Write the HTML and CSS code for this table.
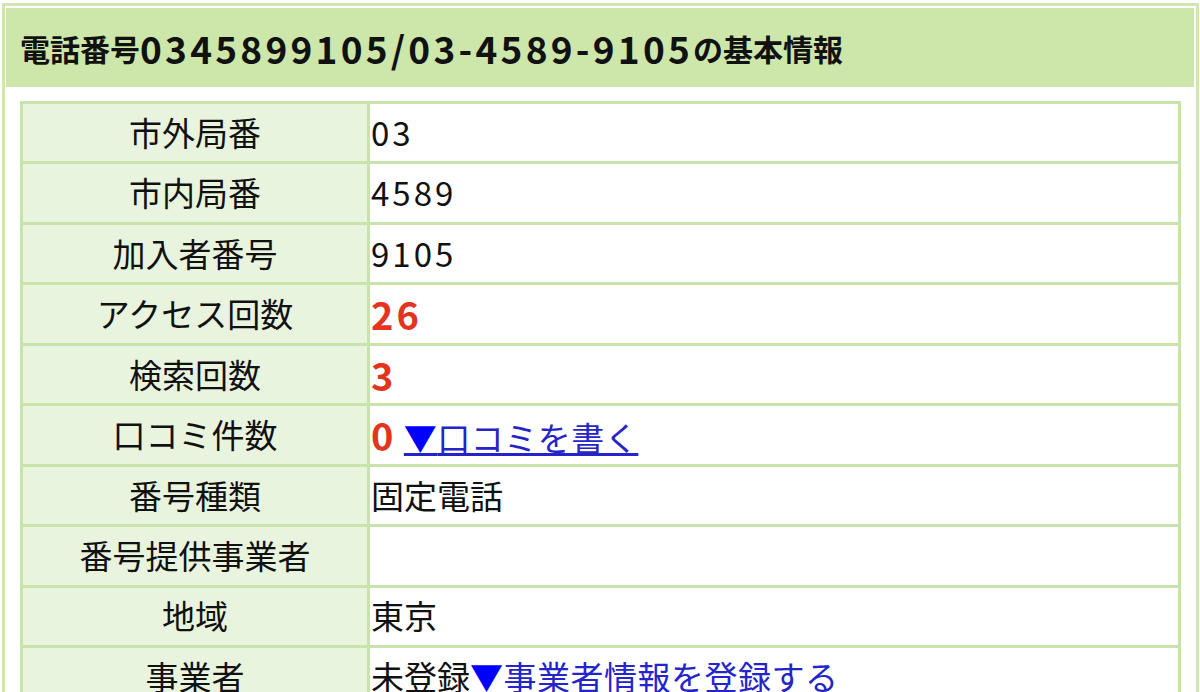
FILE: index.html
```html
<!DOCTYPE html>
<html lang="ja">
<head>
<meta charset="utf-8">
<title>電話番号0345899105/03-4589-9105の基本情報</title>
<link rel="stylesheet" href="styles.css">
</head>
<body>
<div class="page">
  <h2 class="title">電話番号<span class="tnum">0345899105/03-4589-9105</span>の基本情報</h2>
  <table class="info">
    <tr><th>市外局番</th><td><span class="num">03</span></td></tr>
    <tr><th>市内局番</th><td><span class="num">4589</span></td></tr>
    <tr><th>加入者番号</th><td><span class="num">9105</span></td></tr>
    <tr><th>アクセス回数</th><td><strong class="count">26</strong></td></tr>
    <tr><th>検索回数</th><td><strong class="count">3</strong></td></tr>
    <tr><th>口コミ件数</th><td><strong class="count">0</strong> <a class="link" href="#"><span class="tri">▼</span>口コミを書く</a></td></tr>
    <tr><th>番号種類</th><td>固定電話</td></tr>
    <tr><th>番号提供事業者</th><td></td></tr>
    <tr><th>地域</th><td>東京</td></tr>
    <tr><th>事業者</th><td>未登録<a class="link" href="#"><span class="tri">▼</span>事業者情報を登録する</a></td></tr>
  </table>
</div>
</body>
</html>
```
FILE: styles.css
```css
html, body {
  margin: 0;
  padding: 0;
  background: #ffffff;
}
body {
  font-family: "Noto Sans CJK JP", "Liberation Sans", sans-serif;
  color: #111111;
}
.page {
  margin: 3px 1px 0 2px;
  border: 3px solid #cfe6b2;
  border-bottom: none;
  padding: 2px 2px 0 1px;
  min-height: 700px;
}
.title {
  margin: 0;
  background: #cde6aa;
  height: 79px;
  padding: 0 14px;
  display: flex;
  align-items: center;
  font-size: 30px;
  font-weight: 700;
  color: #111111;
  white-space: nowrap;
}
.tnum {
  font-size: 37px;
  letter-spacing: 3.25px;
}
.info {
  margin: 14px 13px 0 14px;
  width: calc(100% - 27px);
  border-collapse: collapse;
  font-size: 33px;
}
.info th, .info td {
  border: 3px solid #c9e4ab;
  height: 57.44px;
  padding: 0;
  line-height: 1.2;
  white-space: nowrap;
}
.info th {
  width: 344px;
  background: #e9f4df;
  font-weight: 400;
  text-align: center;
}
.info td {
  background: #ffffff;
  text-align: left;
  padding-left: 1px;
}
.num {
  letter-spacing: 3px;
}
.count {
  color: #e3341f;
  font-weight: 700;
  font-size: 38px;
  letter-spacing: 3px;
}
.link {
  color: #2424c8;
  text-decoration: underline;
  letter-spacing: 0.5px;
}
.tri {
  color: #0000ff;
}
```
